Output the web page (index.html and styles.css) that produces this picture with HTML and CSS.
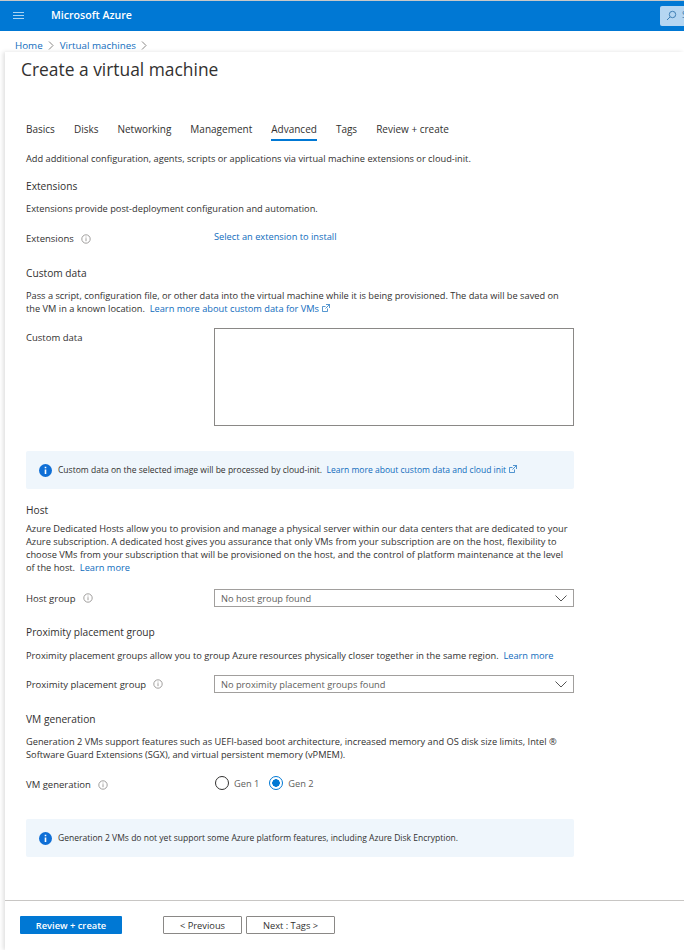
FILE: index.html
```html
<!DOCTYPE html>
<html>
<head>
    <title>Create a virtual machine</title>
    <meta name="viewport" content="width=device-width, initial-scale=1.0">
    <link rel="stylesheet" href="styles.css">
</head>
<body>
    <header class="topbar">
        <svg class="menu-icon" width="11" height="8" viewBox="0 0 11 8"><path d="M0 .5h11M0 3.500h11M0 6.500h11" stroke="#a9d3f2" stroke-width="1"/></svg>
        <span class="brand">Microsoft Azure</span>
        <div class="search">
            <svg width="11" height="11" viewBox="0 0 11 11"><circle cx="6.5" cy="4.5" r="3.2" fill="none" stroke="#3f7fb5"/><path d="M4 7L1 10" stroke="#3f7fb5"/></svg>
            <span class="search-text">Search</span>
        </div>
    </header>
    <nav class="crumbs">
        <a>Home</a>
        <svg class="crumb-sep" width="6" height="9" viewBox="0 0 6 9"><path d="M1 .5l4 4-4 4" fill="none" stroke="#8a8886"/></svg>
        <a>Virtual machines</a>
        <svg class="crumb-sep" width="6" height="9" viewBox="0 0 6 9"><path d="M1 .5l4 4-4 4" fill="none" stroke="#8a8886"/></svg>
    </nav>
    <main class="panel">
        <h1>Create a virtual machine</h1>
        <div class="tabs">
            <span class="tab">Basics</span>
            <span class="tab">Disks</span>
            <span class="tab">Networking</span>
            <span class="tab">Management</span>
            <span class="tab active">Advanced</span>
            <span class="tab">Tags</span>
            <span class="tab">Review + create</span>
        </div>
        <div class="content">
            <p class="intro">Add additional configuration, agents, scripts or applications via virtual machine extensions or cloud-init.</p>

            <h2 class="ext-head">Extensions</h2>
            <p class="ext-desc">Extensions provide post-deployment configuration and automation.</p>
            <div class="row ext-row">
                <div class="label">Extensions <svg class="info" width="10" height="10" viewBox="0 0 10 10"><circle cx="5" cy="5" r="4.2" fill="none" stroke="#8a8886" stroke-width=".8"/><path d="M5 4.2v3M5 2.6v.9" stroke="#8a8886" stroke-width=".8"/></svg></div>
                <a class="control-link">Select an extension to install</a>
            </div>

            <h2 class="custom-head">Custom data</h2>
            <p class="custom-desc">Pass a script, configuration file, or other data into the virtual machine while it is being provisioned. The data will be saved on the VM in a known location.&nbsp; <a>Learn more about custom data for VMs <svg class="ext-link" width="8" height="8" viewBox="0 0 8 8"><path d="M5.5 4.5v3H.5v-5h3M4 .5h3.5V4M7.5 .5L3.5 4.5" fill="none" stroke="#0f6cbd" stroke-width=".7"/></svg></a></p>
            <div class="row custom-row">
                <div class="label">Custom data</div>
                <div class="textarea"></div>
            </div>

            <div class="infobox box-one">
                <svg class="info-solid" width="13" height="13" viewBox="0 0 13 13"><circle cx="6.5" cy="6.5" r="6.5" fill="#0f6fd6"/><path d="M6.5 5.6v4.4M6.5 2.8v1.5" stroke="#fff" stroke-width="1.6"/></svg>
                <span>Custom data on the selected image will be processed by cloud-init.&nbsp; <a>Learn more about custom data and cloud init <svg class="ext-link" width="8" height="8" viewBox="0 0 8 8"><path d="M5.5 4.5v3H.5v-5h3M4 .5h3.5V4M7.5 .5L3.5 4.5" fill="none" stroke="#0f6cbd" stroke-width=".7"/></svg></a></span>
            </div>

            <h2 class="host-head">Host</h2>
            <p class="host-desc">Azure Dedicated Hosts allow you to provision and manage a physical server within our data centers that are dedicated to your Azure subscription. A dedicated host gives you assurance that only VMs from your subscription are on the host, flexibility to choose VMs from your subscription that will be provisioned on the host, and the control of platform maintenance at the level of the host.&nbsp; <a>Learn more</a></p>
            <div class="row select-row host-row">
                <div class="label">Host group <svg class="info" width="10" height="10" viewBox="0 0 10 10"><circle cx="5" cy="5" r="4.2" fill="none" stroke="#8a8886" stroke-width=".8"/><path d="M5 4.2v3M5 2.6v.9" stroke="#8a8886" stroke-width=".8"/></svg></div>
                <div class="select">No host group found
                    <svg width="12" height="7" viewBox="0 0 12 7"><path d="M.5 .5L6 6l5.500-5.500" fill="none" stroke="#555"/></svg>
                </div>
            </div>

            <h2 class="ppg-head">Proximity placement group</h2>
            <p class="ppg-desc">Proximity placement groups allow you to group Azure resources physically closer together in the same region.&nbsp; <a>Learn more</a></p>
            <div class="row select-row ppg-row">
                <div class="label">Proximity placement group <svg class="info" width="10" height="10" viewBox="0 0 10 10"><circle cx="5" cy="5" r="4.2" fill="none" stroke="#8a8886" stroke-width=".8"/><path d="M5 4.2v3M5 2.6v.9" stroke="#8a8886" stroke-width=".8"/></svg></div>
                <div class="select">No proximity placement groups found
                    <svg width="12" height="7" viewBox="0 0 12 7"><path d="M.5 .5L6 6l5.500-5.500" fill="none" stroke="#555"/></svg>
                </div>
            </div>

            <h2 class="gen-head">VM generation</h2>
            <p class="gen-desc">Generation 2 VMs support features such as UEFI-based boot architecture, increased memory and OS disk size limits, Intel ® Software Guard Extensions (SGX), and virtual persistent memory (vPMEM).</p>
            <div class="row gen-row">
                <div class="label gen-label">VM generation <svg class="info" width="10" height="10" viewBox="0 0 10 10"><circle cx="5" cy="5" r="4.2" fill="none" stroke="#8a8886" stroke-width=".8"/><path d="M5 4.2v3M5 2.6v.9" stroke="#8a8886" stroke-width=".8"/></svg></div>
                <div class="radios">
                    <span class="radio"><i class="dot"></i>Gen 1</span>
                    <span class="radio"><i class="dot checked"></i>Gen 2</span>
                </div>
            </div>

            <div class="infobox box-two">
                <svg class="info-solid" width="13" height="13" viewBox="0 0 13 13"><circle cx="6.5" cy="6.5" r="6.5" fill="#0f6fd6"/><path d="M6.5 5.6v4.4M6.5 2.8v1.5" stroke="#fff" stroke-width="1.6"/></svg>
                <span>Generation 2 VMs do not yet support some Azure platform features, including Azure Disk Encryption.</span>
            </div>
        </div>
        <footer class="actions">
            <button class="btn-primary">Review + create</button>
            <button class="btn prev">&lt; Previous</button>
            <button class="btn next">Next : Tags &gt;</button>
        </footer>
    </main>
</body>
</html>
```

FILE: styles.css
```css
* {
    box-sizing: border-box;
}
body {
    margin: 0;
    height: 950px;
    overflow: hidden;
    background: white;
    color: #323130;
    font-family: "Open Sans", Arial, sans-serif;
    font-size: 9.26px;
    line-height: 13px;
}
a {
    color: #0f6cbd;
}
p, h1, h2 {
    margin: 0;
    font-weight: normal;
}
.topbar {
    height: 31px;
    border-top: 1px solid #c8c8c8;
    background: #0078d4;
    display: flex;
    align-items: center;
    padding-left: 13px;
    overflow: hidden;
}
.brand {
    margin: -1px 0 0 27px;
    color: white;
    font-size: 10.6px;
    font-weight: 600;
}
.search {
    margin-left: auto;
    width: 60px;
    height: 20px;
    margin-right: -36px;
    flex: none;
    background: #b5d6f2;
    border-radius: 2px;
    padding: 4px 0 0 6px;
    display: flex;
    align-items: flex-start;
    gap: 5px;
    color: #3f7fb5;
}
.search-text {
    line-height: 10px;
}
.crumbs {
    height: 21px;
    padding: 7px 0 0 15px;
    display: flex;
    align-items: center;
    gap: 5px;
    font-size: 9.8px;
}
.crumb-sep {
    margin-right: 1px;
}
.panel {
    margin-left: 5px;
    height: 898px;
    box-shadow: -2px 0 4px rgba(0, 0, 0, 0.12);
    position: relative;
    display: flex;
    flex-direction: column;
}
h1 {
    margin: 6px 0 0 16px;
    height: 22px;
    font-size: 17.4px;
    line-height: 22px;
    color: #323130;
}
.tabs {
    margin: 39px 0 0 21px;
    display: flex;
    gap: 19px;
    height: 24px;
}
.tab {
    font-size: 10px;
    line-height: 21px;
    height: 22px;
    color: #323130;
}
.tab.active {
    border-bottom: 2px solid #0078d4;
}
.content {
    padding: 0 0 0 21px;
    width: 569px;
    flex: 1;
}
h2 {
    font-size: 10.2px;
    line-height: 14px;
}
.intro { margin-top: 9px; }
.ext-head { margin-top: 14px; }
.ext-desc { margin-top: 9px; }
.ext-row { margin-top: 17px; height: 15px; }
.custom-head { margin-top: 19px; }
.custom-desc { margin-top: 9px; }
.custom-row { margin-top: 13px; }
.box-one { margin-top: 25px; }
.host-head { margin-top: 14px; }
.host-desc { margin-top: 5px; }
.host-row { margin-top: 15px; }
.ppg-head { margin-top: 18px; }
.ppg-desc { margin-top: 10px; }
.ppg-row { margin-top: 13px; }
.gen-head { margin-top: 19px; }
.gen-desc { margin-top: 9px; }
.gen-row { margin-top: 17px; }
.box-two { margin-top: 28px; }
.row {
    display: flex;
    align-items: flex-start;
}
.label {
    width: 188px;
    flex: none;
    font-size: 9.5px;
    display: flex;
    align-items: center;
    gap: 7px;
}
.custom-row .label {
    padding-top: 3px;
}
.select-row {
    align-items: center;
}
.control-link {
    margin-top: -2px;
}
.ext-link {
    margin-left: 1px;
}
.textarea {
    width: 360px;
    height: 98px;
    border: 1px solid #8a8886;
}
.select {
    width: 360px;
    height: 18px;
    border: 1px solid #a19f9d;
    padding: 0 6px;
    line-height: 17px;
    color: #605e5c;
    display: flex;
    justify-content: space-between;
    align-items: center;
}
.infobox {
    width: 548px;
    height: 38px;
    background: #eff6fc;
    border-radius: 2px;
    display: flex;
    align-items: center;
    gap: 6px;
    padding-left: 13px;
    font-size: 8.54px;
}
.radios {
    display: flex;
    gap: 10px;
    margin: -2px 0 0 1px;
}
.radio {
    display: flex;
    align-items: center;
    gap: 5px;
    color: #605e5c;
}
.dot {
    width: 14px;
    height: 14px;
    border: 1px solid #323130;
    border-radius: 50%;
}
.dot.checked {
    border-color: #0078d4;
    background: radial-gradient(circle, #0078d4 0 3.5px, white 4px);
}
.actions {
    border-top: 1px solid #c8c6c4;
    height: 50px;
    padding: 15px 0 0 15px;
    display: flex;
    align-items: flex-start;
    flex: none;
}
button {
    font-family: inherit;
    height: 18px;
    font-size: 9.3px;
    line-height: 14px;
    padding: 1px 0 0;
    border-radius: 1px;
}
.btn-primary {
    width: 102px;
    background: #0078d4;
    color: white;
    border: none;
    font-weight: 600;
}
.btn {
    background: white;
    color: #323130;
    border: 1px solid #8a8886;
}
.prev {
    width: 79px;
    margin-left: 41px;
}
.next {
    width: 89px;
    margin-left: 4px;
}
```
